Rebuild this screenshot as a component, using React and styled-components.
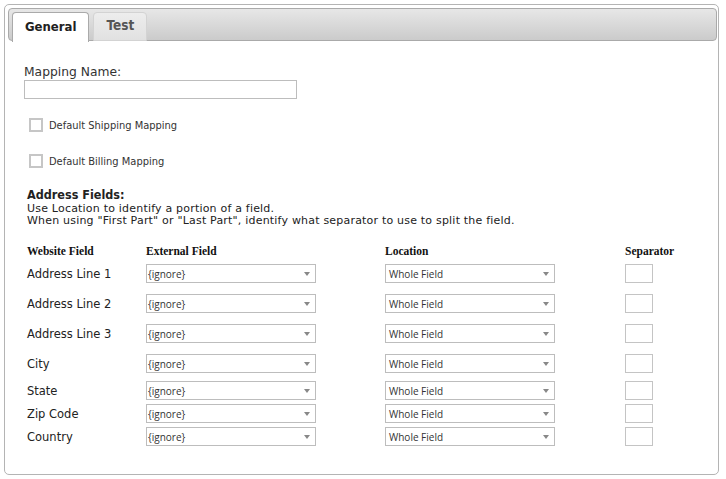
import React from "react";
import styled, { createGlobalStyle } from "styled-components";

const SANS = `"DejaVu Sans", "Liberation Sans", sans-serif`;
const COND = `"DejaVu Sans Condensed", "DejaVu Sans", sans-serif`;
const UI = `"Open Sans", "Noto Sans", sans-serif`;
const SERIF = `"Liberation Serif", serif`;

const Global = createGlobalStyle`
  html, body { margin: 0; padding: 0; background: #fff; }
  body { font-family: ${SANS}; color: #222; }
  * { box-sizing: border-box; }
`;

const Page = styled.div`
  padding: 4px;
`;

const Frame = styled.div`
  width: 715px;
  height: 471px;
  border: 1px solid #b4b4b4;
  border-radius: 5px;
  padding: 3px 1px 3px 3px;
  display: flex;
  flex-direction: column;
`;

const TabBar = styled.div`
  height: 33px;
  border: 1px solid #aaaaaa;
  border-radius: 4px;
  background: linear-gradient(#e7e7e7, #cbcbcb);
  display: flex;
  align-items: flex-end;
  gap: 4px;
  padding: 0 0 0 3px;
`;

const Tab = styled.div`
  height: ${(p) => (p.$active ? "30px" : "29px")};
  margin-bottom: ${(p) => (p.$active ? "-2px" : "-1px")};
  padding: 0 12px 3px;
  border: 1px solid ${(p) => (p.$active ? "#aaaaaa" : "#d3d3d3")};
  border-bottom: ${(p) => (p.$active ? "none" : "1px solid #d3d3d3")};
  border-radius: 4px 4px 0 0;
  background: ${(p) => (p.$active ? "#fff" : "linear-gradient(#ededed, #e1e1e1)")};
  color: ${(p) => (p.$active ? "#212121" : "#555")};
  font-family: ${COND};
  font-weight: bold;
  font-size: ${(p) => (p.$active ? "13px" : "13.5px")};
  display: flex;
  align-items: center;
`;

const Content = styled.div`
  padding: 23px 16px 0 16px;
  flex: 1;
`;

const Label = styled.div`
  font-family: ${SANS};
  font-size: 12.3px;
  line-height: 16px;
  color: #333;
`;

const TextInput = styled.div`
  width: 273px;
  height: 19px;
  border: 1px solid #bdbdbd;
  background: #fff;
`;

const CheckRow = styled.div`
  display: flex;
  align-items: center;
  gap: 6px;
  margin-left: 5px;
  margin-top: ${(p) => p.$mt}px;
  height: 14px;
  font-family: ${COND};
  font-size: 11px;
  color: #333;
`;

const CheckBox = styled.span`
  width: 14px;
  height: 14px;
  border: 2px solid #c6c6c6;
  background: #fff;
  flex: none;
`;

const Section = styled.div`
  margin: 19px 0 0 3px;
`;

const Heading = styled.div`
  font-family: ${COND};
  font-weight: bold;
  font-size: 12.5px;
  line-height: 16px;
  color: #222;
`;

const Desc = styled.div`
  font-family: ${SANS};
  font-size: 11px;
  letter-spacing: 0.2px;
  line-height: 12px;
  color: #222;
`;

const Grid = styled.div`
  display: grid;
  grid-template-columns: 119px 239px 240px 1fr;
  align-items: center;
  margin-top: ${(p) => p.$mt}px;
  height: ${(p) => p.$h}px;
`;

const ColHead = styled.div`
  font-family: ${SERIF};
  font-weight: bold;
  font-size: 11.5px;
  line-height: 13px;
  color: #111;
`;

const FieldName = styled.div`
  font-family: ${SANS};
  font-size: 11.5px;
  color: #222;
`;

const Select = styled.div`
  width: 170px;
  height: 19px;
  border: 1px solid #bdbdbd;
  background: #fff;
  display: flex;
  align-items: center;
  justify-content: space-between;
  padding: 0 5px 0 ${(p) => p.$pl}px;
  font-family: ${UI};
  font-size: 10px;
  color: #333;
`;

const Arrow = styled.span`
  width: 0;
  height: 0;
  border-left: 3.5px solid transparent;
  border-right: 3.5px solid transparent;
  border-top: 4px solid #888;
  margin-top: 1px;
`;

const SepInput = styled.div`
  width: 28px;
  height: 19px;
  border: 1px solid #c4c4c4;
  background: #fff;
`;

const rows = [
  { name: "Address Line 1", mt: 6 },
  { name: "Address Line 2", mt: 11 },
  { name: "Address Line 3", mt: 11 },
  { name: "City", mt: 11 },
  { name: "State", mt: 8 },
  { name: "Zip Code", mt: 4 },
  { name: "Country", mt: 4 },
];

export default function App() {
  return (
    <>
      <Global />
      <Page>
        <Frame>
          <TabBar>
            <Tab $active>General</Tab>
            <Tab>Test</Tab>
          </TabBar>
          <Content>
            <Label>Mapping Name:</Label>
            <TextInput />
            <CheckRow $mt={19}>
              <CheckBox />
              Default Shipping Mapping
            </CheckRow>
            <CheckRow $mt={22}>
              <CheckBox />
              Default Billing Mapping
            </CheckRow>
            <Section>
              <Heading>Address Fields:</Heading>
              <Desc>Use Location to identify a portion of a field.</Desc>
              <Desc>
                When using "First Part" or "Last Part", identify what separator to use to split the field.
              </Desc>
              <Grid $mt={18} $h={13}>
                <ColHead>Website Field</ColHead>
                <ColHead>External Field</ColHead>
                <ColHead>Location</ColHead>
                <ColHead>Separator</ColHead>
              </Grid>
              {rows.map((r) => (
                <Grid key={r.name} $mt={r.mt} $h={19}>
                  <FieldName>{r.name}</FieldName>
                  <Select $pl={1}>
                    {"{ignore}"}
                    <Arrow />
                  </Select>
                  <Select $pl={3}>
                    Whole Field
                    <Arrow />
                  </Select>
                  <SepInput />
                </Grid>
              ))}
            </Section>
          </Content>
        </Frame>
      </Page>
    </>
  );
}
